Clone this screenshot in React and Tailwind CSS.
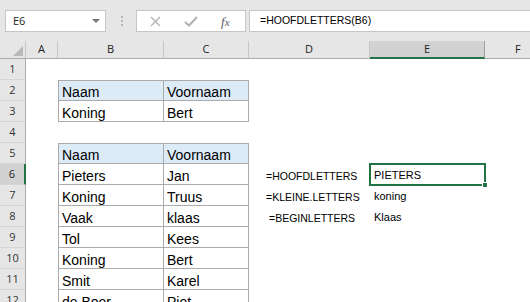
import React from 'react';

const ROWS = [
  { n: 1 },
  { n: 2, b: 'Naam', c: 'Voornaam', head: true, top: true },
  { n: 3, b: 'Koning', c: 'Bert' },
  { n: 4 },
  { n: 5, b: 'Naam', c: 'Voornaam', head: true, top: true },
  { n: 6, b: 'Pieters', c: 'Jan', d: '=HOOFDLETTERS', dPad: 'pl-[17px]', e: 'PIETERS', active: true },
  { n: 7, b: 'Koning', c: 'Truus', d: '=KLEINE.LETTERS', dPad: 'pl-[17px]', e: 'koning' },
  { n: 8, b: 'Vaak', c: 'klaas', d: '=BEGINLETTERS', dPad: 'pl-[20px]', e: 'Klaas' },
  { n: 9, b: 'Tol', c: 'Kees' },
  { n: 10, b: 'Koning', c: 'Bert' },
  { n: 11, b: 'Smit', c: 'Karel' },
  { n: 12, b: 'de Boer', c: 'Piet' },
];

const COLS = [
  { k: 'A', w: 'w-[32px]' },
  { k: 'B', w: 'w-[106px]' },
  { k: 'C', w: 'w-[85px]' },
  { k: 'D', w: 'w-[121px]' },
  { k: 'E', w: 'w-[115px]' },
];

const Toolbar = () => (
  <div className="h-[41px] bg-[#e6e6e6] flex items-start pt-[10px]">
    {/* Name box */}
    <div className="ml-[5px] w-[101px] h-[22px] bg-white border border-[#c6c6c6] flex items-center justify-between pl-[7px] pr-[5px]">
      <span className="text-[11px] text-[#222] font-['Open_Sans',sans-serif]">E6</span>
      <svg width="8" height="4" viewBox="0 0 8 4"><path d="M0 0h8L4 4z" fill="#777" /></svg>
    </div>
    <div className="ml-[15px] h-[22px] flex flex-col justify-center gap-[2px]">
      <div className="w-[2px] h-[2px] bg-[#b4b4b4]" />
      <div className="w-[2px] h-[2px] bg-[#b4b4b4]" />
      <div className="w-[2px] h-[2px] bg-[#b4b4b4]" />
    </div>
    {/* Formula buttons */}
    <div className="ml-[13px] w-[110px] h-[22px] bg-white border border-[#c6c6c6] flex items-center">
      <svg className="ml-[13px]" width="11" height="11" viewBox="0 0 11 11">
        <path d="M1 1L10 10M10 1L1 10" stroke="#b0b0b0" strokeWidth="1.3" fill="none" />
      </svg>
      <svg className="ml-[23px]" width="14" height="11" viewBox="0 0 14 11">
        <path d="M1 6L5 9.5L13 1" stroke="#b0b0b0" strokeWidth="2" fill="none" />
      </svg>
      <span className="ml-[23px] text-[13px] italic text-[#5a5a5a] font-['Liberation_Serif',serif] leading-none">
        f<span className="text-[11px]">x</span>
      </span>
    </div>
    {/* Formula input */}
    <div className="ml-[3px] flex-1 h-[22px] bg-white border border-r-0 border-[#c6c6c6] flex items-center pl-[10px]">
      <span className="text-[10.5px] text-black font-['Liberation_Sans',sans-serif]">=HOOFDLETTERS(B6)</span>
    </div>
  </div>
);

const ColumnHeader = () => (
  <div className="h-[18px] flex bg-[#e6e6e6] border-b border-[#ababab] font-['Open_Sans',sans-serif] text-[11px] text-[#222]">
    <div className="w-[26px] relative border-r border-[#c6c6c6]">
      <svg className="absolute left-[13px] top-[5px]" width="10" height="10" viewBox="0 0 10 10">
        <path d="M10 0V10H0z" fill="#b8b8b8" />
      </svg>
    </div>
    {COLS.map((c) =>
      c.k === 'E' ? (
        <div key={c.k} className={`${c.w} bg-[#d2d2d2] border-r border-[#9f9f9f] border-b-2 border-b-[#217346] -mb-[1px] flex items-center justify-center`}>
          {c.k}
        </div>
      ) : (
        <div key={c.k} className={`${c.w} border-r border-[#c6c6c6] flex items-center justify-center`}>
          {c.k}
        </div>
      )
    )}
    <div className="flex-1 flex items-center pl-[30px]">F</div>
  </div>
);

const Row = ({ r }) => {
  const tbl = r.b !== undefined;
  const cellBase = 'h-[21px] flex items-end pb-[1px] pl-[3px] leading-none text-[14px] text-black overflow-hidden whitespace-nowrap';
  const fill = r.head ? 'bg-[#ddebf7]' : '';
  const topB = r.top ? 'border-t' : '';
  return (
    <div className="h-[21px] flex">
      <div
        className={`w-[26px] h-[21px] flex items-center justify-center text-[11px] font-['Open_Sans',sans-serif] border-b border-[#d5d5d5] ${
          r.active ? 'bg-[#d2d2d2] text-[#222] border-r-2 border-r-[#217346]' : 'bg-[#e6e6e6] text-[#333] border-r border-r-[#ababab]'
        }`}
      >
        {r.n}
      </div>
      <div className="w-[32px]" />
      {tbl ? (
        <>
          <div className={`w-[106px] ${cellBase} ${fill} border-l border-r border-b ${topB} border-[#ababab]`}>{r.b}</div>
          <div className={`w-[85px] ${cellBase} ${fill} border-r border-b ${topB} border-[#ababab]`}>{r.c}</div>
        </>
      ) : (
        <>
          <div className="w-[106px]" />
          <div className="w-[85px]" />
        </>
      )}
      <div className={`w-[121px] h-[21px] flex items-end pb-[4px] leading-none text-[10.5px] text-black ${r.dPad || ''}`}>{r.d}</div>
      <div className="w-[115px] h-[21px] relative flex items-end pb-[4px] pl-[4px] leading-none text-[11px] text-black">
        {r.active && (
          <>
            <div className="absolute -left-[1px] -top-[1px] w-[117px] h-[23px] border-2 border-[#217346]" />
            <div className="absolute -right-[3px] -bottom-[3px] w-[6px] h-[6px] bg-[#217346] border border-white" />
          </>
        )}
        <span className="relative">{r.e}</span>
      </div>
      <div className="flex-1" />
    </div>
  );
};

export default function App() {
  return (
    <div className="w-[530px] h-[302px] overflow-hidden bg-white font-['Liberation_Sans',sans-serif]">
      <Toolbar />
      <ColumnHeader />
      <div>
        {ROWS.map((r) => (
          <Row key={r.n} r={r} />
        ))}
      </div>
    </div>
  );
}
